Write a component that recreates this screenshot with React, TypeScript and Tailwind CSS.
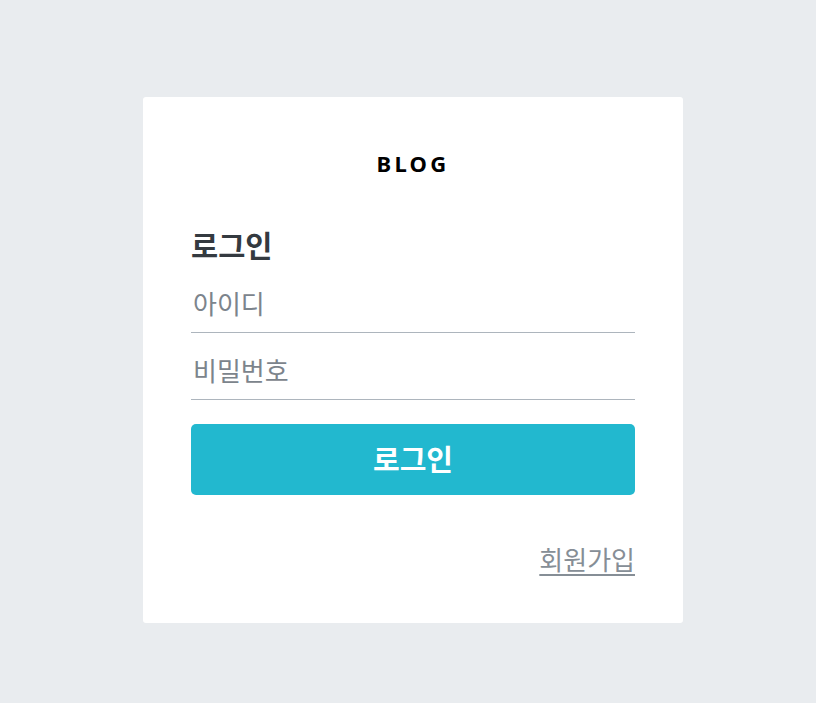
import React, { useState } from "react";

const font = "font-['Noto_Sans','Noto_Sans_CJK_KR',sans-serif]";

const AuthInput = ({
  placeholder,
  type = "text",
  className = "",
}: {
  placeholder: string;
  type?: string;
  className?: string;
}) => {
  const [value, setValue] = useState("");
  return (
    <input
      type={type}
      value={value}
      placeholder={placeholder}
      onChange={(e) => setValue(e.target.value)}
      className={`block w-full border-b border-[#adb5bd] bg-transparent pt-2 pb-[10px] pl-[2px] text-[26px] leading-[36px] text-[#343a40] placeholder:text-[#7c848c] focus:outline-none ${className}`}
    />
  );
};

const App = () => {
  return (
    <div className={`min-h-[703px] bg-[#e9ecef] pt-[97px] ${font}`}>
      <div className="ml-[143px] w-[540px] rounded-[3px] bg-white px-12 pt-[51px] pb-[45px]">
        <div className="text-center text-[22px] font-bold leading-[30px] tracking-[0.15em] text-black">
          BLOG
        </div>
        <h3 className="mt-[50px] text-[29.5px] font-bold leading-[36px] text-[#343a40]">
          로그인
        </h3>
        <form
          className="mt-[14px]"
          onSubmit={(e) => {
            e.preventDefault();
          }}
        >
          <AuthInput placeholder="아이디" />
          <AuthInput placeholder="비밀번호" type="password" className="mt-3" />
          <button
            type="submit"
            className="mt-6 flex h-[71px] w-full items-center justify-center rounded-[5px] bg-[#22b8cf] text-[29px] font-bold text-white"
          >
            로그인
          </button>
        </form>
        <div className="mt-[47px] text-right">
          <a
            href="#"
            className="text-[26px] leading-[36px] text-[#868e96] underline underline-offset-4"
          >
            회원가입
          </a>
        </div>
      </div>
    </div>
  );
};

export default App;
